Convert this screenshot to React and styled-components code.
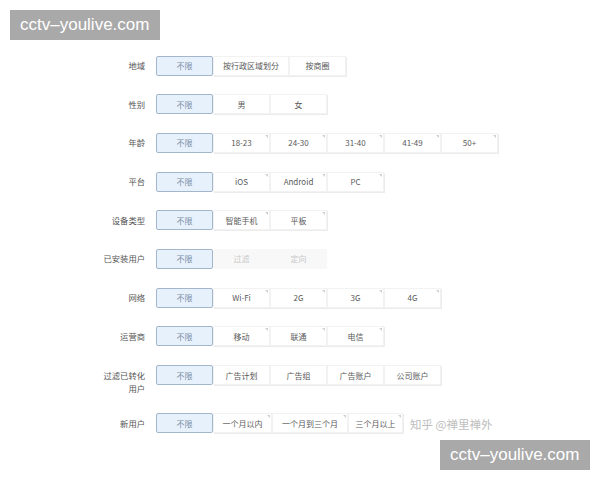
import { createGlobalStyle, styled } from "styled-components";

const GlobalStyle = createGlobalStyle`
  html, body {
    margin: 0;
    padding: 0;
    background: #ffffff;
  }
  body {
    width: 600px;
    height: 480px;
    overflow: hidden;
    font-family: "Noto Sans CJK SC", "Liberation Sans", sans-serif;
  }
`;

const Page = styled.div`
  position: relative;
  width: 600px;
  height: 480px;
  box-sizing: border-box;
  padding: 55.5px 0 0 100px;
`;

const Form = styled.div`
  display: flex;
  flex-direction: column;
  gap: 18.7px;
`;

const Row = styled.div`
  display: flex;
  align-items: flex-start;
  gap: 11px;
`;

const Label = styled.div`
  width: 45px;
  flex: none;
  text-align: right;
  font-size: 8.3px;
  line-height: 13px;
  padding-top: 3.5px;
  color: #555;
  word-break: break-all;
`;

const Options = styled.div`
  display: flex;
`;

const Option = styled.div`
  position: relative;
  box-sizing: border-box;
  width: ${(p) => p.$w || 57}px;
  height: 20px;
  display: flex;
  align-items: center;
  justify-content: center;
  font-size: 8px;
  white-space: nowrap;
  color: ${(p) => (p.$active ? "#7b8da3" : p.$disabled ? "#c8c8c8" : "#5a5a5a")};
  background: ${(p) =>
    p.$active ? "#e6f1fc" : p.$disabled ? "#f8f8f8" : "#ffffff"};
  border: 1px solid
    ${(p) => (p.$active ? "#a3b6cb" : p.$disabled ? "#f8f8f8" : "#f2f2f2")};
  border-radius: ${(p) => (p.$active ? "2px" : "0")};
  box-shadow: ${(p) =>
    p.$active || p.$disabled ? "none" : "1px 1px 0 #ececec"};

  &::after {
    content: "";
    display: ${(p) => (p.$mark ? "block" : "none")};
    position: absolute;
    top: 1px;
    right: 1px;
    width: 0;
    height: 0;
    border-top: 3px solid #cfcfcf;
    border-left: 3px solid transparent;
  }
`;

const Stamp = styled.div`
  position: absolute;
  left: ${(p) => p.$x}px;
  top: ${(p) => p.$y}px;
  width: 150px;
  height: 30px;
  background: #a9a9a9;
  color: #ffffff;
  font-family: "Liberation Sans", Arial, sans-serif;
  font-size: 17px;
  line-height: 30px;
  padding-left: 10px;
  box-sizing: border-box;
`;

const Credit = styled.div`
  position: absolute;
  left: 410px;
  top: 415px;
  font-size: 11.5px;
  line-height: 18px;
  color: #bdbdbd;
  white-space: nowrap;
`;

const rows = [
  { label: "地域", options: [{ t: "按行政区域划分", w: 76 }, { t: "按商圈" }] },
  { label: "性别", options: [{ t: "男" }, { t: "女" }] },
  {
    label: "年龄",
    mark: true,
    options: [{ t: "18-23" }, { t: "24-30" }, { t: "31-40" }, { t: "41-49" }, { t: "50+" }],
  },
  { label: "平台", mark: true, options: [{ t: "iOS" }, { t: "Android" }, { t: "PC" }] },
  { label: "设备类型", mark: true, options: [{ t: "智能手机" }, { t: "平板" }] },
  {
    label: "已安装用户",
    disabled: true,
    options: [{ t: "过滤" }, { t: "定向" }],
  },
  {
    label: "网络",
    mark: true,
    options: [{ t: "Wi-Fi" }, { t: "2G" }, { t: "3G" }, { t: "4G" }],
  },
  { label: "运营商", mark: true, options: [{ t: "移动" }, { t: "联通" }, { t: "电信" }] },
  {
    label: "过滤已转化用户",
    options: [{ t: "广告计划" }, { t: "广告组" }, { t: "广告账户" }, { t: "公司账户" }],
  },
  {
    label: "新用户",
    mark: true,
    options: [
      { t: "一个月以内", w: 59 },
      { t: "一个月到三个月", w: 76 },
      { t: "三个月以上", w: 55 },
    ],
  },
];

export default function App() {
  return (
    <Page>
      <GlobalStyle />
      <Form>
        {rows.map((row) => (
          <Row key={row.label}>
            <Label>{row.label}</Label>
            <Options>
              <Option $active>不限</Option>
              {row.options.map((o) => (
                <Option
                  key={o.t}
                  $w={o.w}
                  $mark={row.mark}
                  $disabled={row.disabled}
                >
                  {o.t}
                </Option>
              ))}
            </Options>
          </Row>
        ))}
      </Form>
      <Credit>知乎 @禅里禅外</Credit>
      <Stamp $x={10} $y={10}>cctv–youlive.com</Stamp>
      <Stamp $x={440} $y={440}>cctv–youlive.com</Stamp>
    </Page>
  );
}
